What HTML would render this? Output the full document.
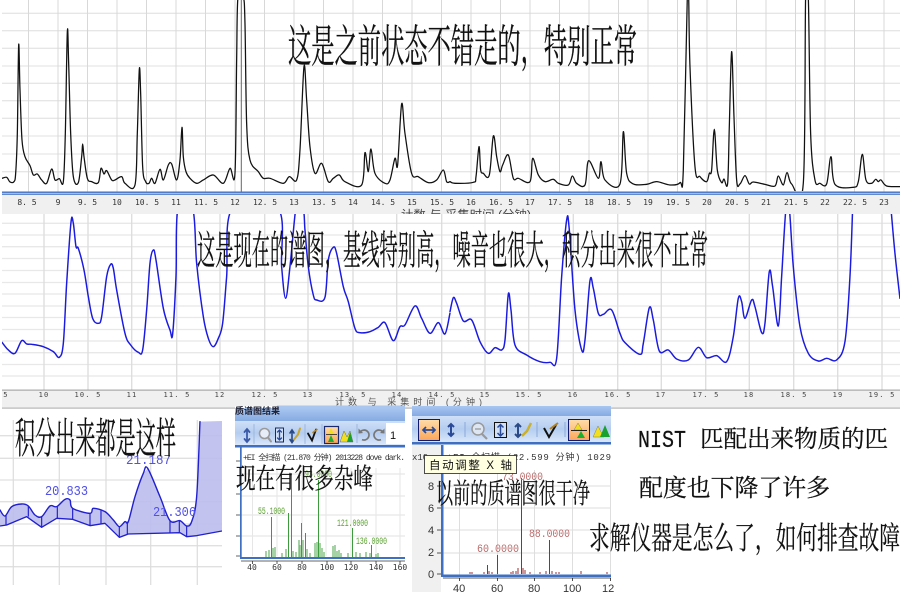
<!DOCTYPE html>
<html><head><meta charset="utf-8"><style>
html,body{margin:0;padding:0;background:#fff;width:900px;height:600px;overflow:hidden}
svg{display:block}
.cn{font-family:"Liberation Serif","Noto Serif CJK SC",serif;fill:#111;stroke:#111;stroke-width:.25px}
.sans{font-family:"Liberation Sans","Noto Sans CJK SC",sans-serif}
.ax{font-family:"DejaVu Sans Mono","Liberation Mono",monospace;font-size:8px;fill:#333;text-anchor:middle}
.ax2{font-family:"DejaVu Sans Mono","Liberation Mono",monospace;font-size:7px;letter-spacing:1.2px;fill:#444;text-anchor:middle}
.m{font-family:"Liberation Mono",monospace}
.t{stroke-linejoin:round;stroke-linecap:round;filter:blur(.3px)}
</style></head><body>
<svg width="900" height="600" viewBox="0 0 900 600" xmlns="http://www.w3.org/2000/svg">
<defs>
<clipPath id="c1"><rect x="2" y="0" width="898" height="191"/></clipPath>
<clipPath id="c2"><rect x="2" y="214" width="898" height="176"/></clipPath>
<clipPath id="c3"><rect x="0" y="420" width="222" height="170"/></clipPath>
<linearGradient id="bar" x1="0" y1="0" x2="0" y2="1"><stop offset="0" stop-color="#cfe0f7"/><stop offset=".5" stop-color="#b4cdf0"/><stop offset="1" stop-color="#d9e7fa"/></linearGradient>
<linearGradient id="tit" x1="0" y1="0" x2="0" y2="1"><stop offset="0" stop-color="#a8c6f0"/><stop offset="1" stop-color="#86abe2"/></linearGradient>
<linearGradient id="org" x1="0" y1="0" x2="0" y2="1"><stop offset="0" stop-color="#ffdca8"/><stop offset="1" stop-color="#fba65a"/></linearGradient>
</defs>

<!-- top chart -->
<rect x="2" y="0" width="898" height="214" fill="#fff"/>
<path d="M2 13.3H900M2 30.7H900M2 48.3H900M2 66H900M2 83.3H900M2 100.7H900M2 118.3H900M2 136H900M2 154H900M2 171.7H900" stroke="#e6e6e6" stroke-width="1.3" fill="none"/>
<path d="M28.5 0V192M58 0V192M87.5 0V192M117 0V192M146.5 0V192M176 0V192M205.5 0V192M235 0V192M264.5 0V192M294 0V192M323.5 0V192M353 0V192M382.5 0V192M412 0V192M441.5 0V192M471 0V192M500.5 0V192M530 0V192M559.5 0V192M589 0V192M618.5 0V192M648 0V192M677.5 0V192M707 0V192M736.5 0V192M766 0V192M795.5 0V192M825 0V192M854.5 0V192M884 0V192" stroke="#d8d8d8" stroke-width="1"/>
<g clip-path="url(#c1)">
<path class="t" transform="scale(.3333)" fill="none" stroke="#111" stroke-width="3.8" d="M6 535L20 532L30 546L42 545L47 520L52 400L56 135L60 270L66 420L75 470L90 497L100 525L112 522L125 540L140 550L155 507L165 540L178 536L190 545L196 400L202 95L206 190L212 400L220 530L235 548L245 470L248 432L252 470L262 535L275 545L295 548L303 505L312 522L320 512L335 540L345 540L365 530L375 550L405 555L412 400L418 208L422 280L428 500L437 545L447 550L455 535L465 550L480 508L490 540L505 495L515 492L530 540L540 480L546 382L550 470L558 515L570 535L590 550L610 540L640 525L670 550L690 505L705 520L710 180L714 -10L730 -10L735 70L740 370L750 480L775 515L790 535L810 535L850 550L868 530L890 540L900 450L912 200L920 300L930 440L945 520L965 490L985 545L1000 535L1018 525L1035 545L1085 555L1095 458L1105 515L1113 447L1125 520L1155 550L1170 540L1185 475L1193 495L1205 312L1215 400L1235 520L1255 530L1285 548L1310 540L1330 510L1340 545L1350 545"/>
<path class="t" transform="translate(450 0) scale(.3333)" fill="none" stroke="#111" stroke-width="3.8" d="M0 545L15 550L70 547L78 530L87 440L92 510L100 520L118 525L130 408L140 470L150 515L158 495L175 465L190 535L205 535L240 545L248 475L265 525L285 545L310 538L325 550L355 555L367 528L380 550L405 555L416 482L445 535L453 485L465 540L510 552L520 395L530 520L550 552L590 553L620 545L660 555L690 548L700 510L712 -10L716 -10L720 200L735 500L750 530L770 545L778 520L785 510L793 388L802 510L815 548L822 537L833 550L838 380L845 155L852 350L860 540L870 552L885 527L898 552L910 546L945 553L975 558L985 528L1000 555L1011 518L1025 552L1060 550L1067 -10L1075 -10L1082 400L1095 540L1110 550L1130 552L1143 470L1155 553L1210 562L1225 545L1237 463L1248 540L1265 550L1277 538L1285 545L1293 540L1310 558L1350 560"/>
</g>
<path d="M241.3 0V192" stroke="#666" stroke-width="1"/>
<rect x="2" y="192" width="898" height="22" fill="#f0f0f0"/>
<rect x="2" y="191.5" width="898" height="1.4" fill="#3f6fc6"/>
<rect x="2" y="193.6" width="898" height="1.2" fill="#3f6fc6"/>
<g class="ax">
<text x="27" y="205">8. 5</text><text x="58" y="205">9</text><text x="87.5" y="205">9. 5</text><text x="117" y="205">10</text><text x="147" y="205">10. 5</text><text x="176" y="205">11</text><text x="206" y="205">11. 5</text><text x="235" y="205">12</text><text x="265" y="205">12. 5</text><text x="294" y="205">13</text><text x="324" y="205">13. 5</text><text x="353" y="205">14</text><text x="383" y="205">14. 5</text><text x="412" y="205">15</text><text x="442" y="205">15. 5</text><text x="471" y="205">16</text><text x="501" y="205">16. 5</text><text x="530" y="205">17</text><text x="560" y="205">17. 5</text><text x="589" y="205">18</text><text x="619" y="205">18. 5</text><text x="648" y="205">19</text><text x="678" y="205">19. 5</text><text x="707" y="205">20</text><text x="737" y="205">20. 5</text><text x="766" y="205">21</text><text x="796" y="205">21. 5</text><text x="825" y="205">22</text><text x="855" y="205">22. 5</text><text x="884" y="205">23</text>
</g>
<text x="401" y="218" class="sans" font-size="11" fill="#444" textLength="130" lengthAdjust="spacingAndGlyphs">计数 与 采集时间 (分钟)</text>

<!-- second chart -->
<rect x="2" y="214" width="898" height="176" fill="#fff"/>
<path d="M2 223.3H900M2 235H900M2 246.7H900M2 258.5H900M2 270.5H900M2 282.5H900M2 294H900M2 306H900M2 317.5H900M2 329.5H900M2 341H900M2 352.7H900M2 364.5H900M2 376H900" stroke="#e8e8e8" stroke-width="1.3" fill="none"/>
<path d="M44 214V390M88 214V390M131.7 214V390M176.7 214V390M220 214V390M264.7 214V390M308 214V390M353 214V390M396.7 214V390M441.7 214V390M485 214V390M528.7 214V390M573.3 214V390M617.7 214V390M661.3 214V390M705.7 214V390M749.3 214V390M793.7 214V390M837.7 214V390M882 214V390" stroke="#dcdcdc" stroke-width="1.3"/>
<g clip-path="url(#c2)">
<path class="t" transform="translate(0 210) scale(.3333)" fill="none" stroke="#1a1ae0" stroke-width="4.4" d="M6 397L25 420L45 430L65 392L80 402L95 403L130 410L160 425L178 442L190 400L200 220L213 37L220 40L228 110L235 115L252 180L265 260L278 325L295 340L305 320L320 200L332 163L340 175L350 240L375 370L392 405L415 427L428 420L440 300L450 160L460 120L468 150L490 295L510 360L518 372L528 200L534 -5L578 -5L590 160L610 320L625 385L640 410L655 385L668 340L680 200L697 -5L834 -5L845 170L857 265L870 170L885 15L890 0L910 0L915 60L925 170L940 255L950 270L975 262L985 150L1000 112L1010 130L1030 230L1045 275L1065 355L1080 368L1110 365L1135 352L1155 338L1180 392L1200 350L1215 345L1245 288L1265 325L1290 370L1315 338L1335 372L1350 310"/>
<path class="t" transform="translate(450 210) scale(.3333)" fill="none" stroke="#1a1ae0" stroke-width="4.4" d="M0 305L10 263L20 280L40 333L65 330L90 395L115 430L135 413L155 420L165 390L175 252L183 300L195 405L230 435L270 455L300 457L320 445L335 200L350 30L358 60L375 300L395 420L405 390L420 212L430 235L445 310L460 313L485 300L510 370L525 398L570 433L580 400L598 293L610 330L628 423L655 420L680 447L715 450L745 412L770 443L800 437L830 455L850 380L865 265L875 275L885 325L905 270L915 290L935 368L945 340L958 185L968 230L985 348L995 200L1008 -5L1018 -5L1030 170L1050 350L1075 430L1105 453L1130 445L1160 450L1185 395L1200 200L1208 -5M1323 -5L1335 130L1350 265"/>
</g>
<rect x="2" y="390" width="898" height="18" fill="#f0f0f0"/>
<rect x="2" y="389.6" width="898" height="1" fill="#999"/>
<rect x="2" y="407.6" width="898" height="1" fill="#aaa"/>
<g class="ax2">
<text x="6" y="397">5</text><text x="44" y="397">10</text><text x="88" y="397">10. 5</text><text x="132" y="397">11</text><text x="177" y="397">11. 5</text><text x="220" y="397">12</text><text x="265" y="397">12. 5</text><text x="308" y="397">13</text><text x="353" y="397">13. 5</text><text x="397" y="397">14</text><text x="442" y="397">14. 5</text><text x="485" y="397">15</text><text x="529" y="397">15. 5</text><text x="573" y="397">16</text><text x="618" y="397">16. 5</text><text x="661" y="397">17</text><text x="706" y="397">17. 5</text><text x="749" y="397">18</text><text x="794" y="397">18. 5</text><text x="838" y="397">19</text><text x="882" y="397">19. 5</text>
</g>
<text x="335" y="405" class="sans" font-size="9" fill="#555" textLength="147" lengthAdjust="spacing">计数 与 采集时间 (分钟)</text>

<!-- bottom left integration -->
<rect x="0" y="409" width="234" height="191" fill="#fff"/>
<path d="M0 435.7H222M0 458.3H222M0 480H222M0 501.7H222M0 524H222M0 545.7H222M0 566.7H222" stroke="#e0e0e0" stroke-width="1.3" fill="none"/>
<path d="M13.3 420V585M59.3 420V585M106 420V585M150.7 420V585M197.3 420V585" stroke="#dcdcdc" stroke-width="1.2"/>
<g clip-path="url(#c3)"><g transform="translate(0 400) scale(.3333)">
<path fill="#bcbcee" fill-opacity=".9" d="M0 330L15 348L35 320L65 312L85 318L105 345L125 350L150 318L170 320L195 298L210 300L218 325L270 340L280 325L315 335L340 360L358 380L375 365L385 365L405 290L430 220L443 205L480 290L510 362L540 362L560 378L575 365L590 290L600 65L666 63L666 393L590 407L560 410L540 398L385 402L358 412L315 370L270 377L218 358L170 355L125 382L80 350L20 375L0 378Z"/>
<path class="t" fill="none" stroke="#2020d0" stroke-width="4.200" d="M0 330L15 348L35 320L65 312L85 318L105 345L125 350L150 318L170 320L195 298L210 300L218 325L270 340L280 325L315 335L340 360L358 380L375 365L385 365L405 290L430 220L443 205L480 290L510 362L540 362L560 378L575 365L590 290L600 65"/>
<path fill="none" stroke="#2020d0" stroke-width="4" stroke-linejoin="round" d="M0 378L20 375L80 350L125 382L170 355L218 358L270 377L315 370L358 412L385 402L540 398L560 410L590 407L666 393"/>
<path fill="none" stroke="#2020d0" stroke-width="3.5" d="M18 345V376M85 318V350M125 350V382M172 320V355M218 325V358M270 340V377M303 332V371M358 380V412M382 365V402M510 362V398M538 362V398M560 378V410"/>
</g></g>
<g class="m" font-size="14" fill="#5050ea">
<text x="45" y="495" textLength="43" lengthAdjust="spacingAndGlyphs">20.833</text>
<text x="126" y="464" textLength="45" lengthAdjust="spacingAndGlyphs">21.187</text>
<text x="153" y="516" textLength="43" lengthAdjust="spacingAndGlyphs">21.306</text>
</g>

<!-- middle spectrum -->
<rect x="235" y="406" width="170" height="164" fill="#fff"/>
<rect x="277" y="405.500" width="128" height="3.500" fill="#aac6ee"/>
<rect x="235" y="408" width="170" height="13" fill="url(#tit)"/>
<text x="235" y="414" class="sans" font-size="9" fill="#223" font-weight="bold" textLength="45" lengthAdjust="spacingAndGlyphs">质谱图结果</text>
<rect x="235" y="421" width="170" height="24" fill="url(#bar)"/>
<rect x="235" y="445" width="170" height="2.500" fill="#3e6fc0"/>
<rect x="386" y="423" width="19" height="21" fill="#fff"/>
<text x="390" y="439" class="sans" font-size="11" fill="#111">1</text>
<g fill="none" stroke-linecap="round" transform="translate(0 1.500)">
<path d="M247 428V440M244.500 430.500L247 427.500L249.500 430.500M244.500 437.500L247 440.500L249.500 437.500" stroke="#3a5aa8" stroke-width="1.800"/>
<path d="M254 423V442" stroke="#9cb6dc"/>
<circle cx="264.500" cy="432" r="5" stroke="#999" stroke-width="1.500" fill="#e8eef8"/><path d="M268 436L271 440" stroke="#999" stroke-width="2"/>
<rect x="275.500" y="426.500" width="8" height="14" stroke="#1a2a60" stroke-width="1" fill="#cfe0f7"/>
<path d="M279.500 428.500V438.500M277.500 430.500L279.500 428.500L281.500 430.500M277.500 436.500L279.500 438.500L281.500 436.500" stroke="#2a4a98" stroke-width="1.300"/>
<path d="M292 429V441M290 431.500L292 428.500L294 431.500M290 438L292 441L294 438" stroke="#2a4a88" stroke-width="1.600"/>
<path d="M294 438L298 433L300 427" stroke="#c8a830" stroke-width="2"/>
<path d="M305 423V442" stroke="#9cb6dc"/>
<path d="M308 432L312 439L316 428" stroke="#111" stroke-width="1.800"/><path d="M313 431L317 428" stroke="#b08020" stroke-width="1.500"/>
<path d="M322 423V442" stroke="#9cb6dc"/>
</g>
<rect x="324.500" y="426.500" width="14" height="17" fill="url(#org)" stroke="#1a2a70" stroke-width="1.200"/>
<path d="M331 428L328 434H334Z" fill="#f2e020"/><path d="M331 435L328 442H334Z" fill="#18b030"/><path d="M326 434.500H337" stroke="#222" stroke-width=".8"/>
<path d="M340 442L344 431L347 437L350 431L353 442Z" fill="#f2e020" stroke="#222" stroke-width=".3"/><path d="M347 442L350 432L353 442Z" fill="#18a030"/>
<path d="M357 424V443" stroke="#9cb6dc"/>
<path d="M360.500 431.500A5 5 0 1 1 362 439.600" fill="none" stroke="#777" stroke-width="1.700"/><path d="M358.500 428.500V433.500L363 433Z" fill="#777"/>
<path d="M382.500 431.500A5 5 0 1 0 381 439.600" fill="none" stroke="#777" stroke-width="1.700"/><path d="M384.500 428.500V433.500L380 433Z" fill="#777"/>
<text x="243" y="460" class="m" font-size="8" fill="#333" textLength="162" lengthAdjust="spacing">+EI 全扫描 (21.870 分钟) 2013228 dove dark.</text>
<path d="M252.500 468V556M277 468V556M302 468V556M326 468V556M351 468V556M376 468V556M400 468V556" stroke="#e6e6e6"/>
<path d="M241 474H405M241 496H405M241 515H405M241 536H405" stroke="#e6e6e6" stroke-width="1.300"/>
<path d="M271.500 517V557M288.500 513V557M291.500 473V557M301.500 523V557M305.500 533V557M318.500 480V557M352.500 528V557M371.500 545V557" stroke="#3d9a3d" stroke-width="1"/>
<path d="M266 551V557M269 550V557M273 548V557M275 547V557M282 553V557M286 549V557M293 551V557M296 552V557M299 540V557M300 545V557M303 540V557M307 549V557M310 553V557M315 543V557M317 542V557M320 543V557M322 548V557M324 552V557M333 546V557M335 545V557M337 551V557M339 550V557M341 553V557M348 553V557M356 552V557M360 553V557M366 552V557M370 553V557M376 554V557M378 553V557" stroke="#7fbe7f" stroke-width="1.400"/>
<g class="m" font-size="10" fill="#5aa030">
<text x="258" y="514" textLength="27" lengthAdjust="spacingAndGlyphs">55.1000</text>
<text x="337" y="526" textLength="31" lengthAdjust="spacingAndGlyphs">121.0000</text>
<text x="356" y="544" textLength="31" lengthAdjust="spacingAndGlyphs">136.0000</text>
<text x="305" y="477" textLength="27" lengthAdjust="spacingAndGlyphs">93.0000</text>
</g>
<rect x="240" y="447.500" width="1.700" height="111" fill="#3e6fc0"/>
<rect x="240" y="557" width="165" height="2" fill="#3e6fc0"/>
<path d="M236 461H240M236 494H240M236 515H240M236 536H240M236 556H240M241 561H405M252.500 561V564M277 561V564M302 561V564M327 561V564M351 561V564M376 561V564M400 561V564" stroke="#333" stroke-width=".8" fill="none"/>
<g class="ax"><text x="252" y="570">40</text><text x="277" y="570">60</text><text x="302" y="570">80</text><text x="327" y="570">100</text><text x="351" y="570">120</text><text x="376" y="570">140</text><text x="400" y="570">160</text></g>

<!-- right spectrum -->
<rect x="412" y="406" width="199" height="186" fill="#fff"/>
<rect x="412" y="444" width="29" height="148" fill="#f0f0f0"/>
<rect x="412" y="406" width="199" height="10" fill="url(#tit)"/>
<rect x="412" y="416" width="199" height="26" fill="url(#bar)"/>
<rect x="412" y="442" width="199" height="2.500" fill="#3e6fc0"/>
<rect x="418.500" y="419.500" width="21" height="21" fill="url(#org)" stroke="#101a70" stroke-width="1"/>
<path d="M423 430H435M426 427L423 430L426 433M432 427L435 430L432 433" fill="none" stroke="#2a4a98" stroke-width="1.700"/>
<path d="M451 424V436M448 427L451 424L454 427M448 433L451 436L454 433" fill="none" stroke="#2a4a98" stroke-width="2"/>
<path d="M465 422V437" stroke="#8aa8d8"/>
<circle cx="478" cy="429" r="6" fill="#dde6f2" stroke="#999" stroke-width="1.500"/><path d="M482 434L487 439" stroke="#999" stroke-width="2.200"/><path d="M475 429H481" stroke="#999" stroke-width="1.300"/>
<rect x="494.500" y="422.500" width="12" height="15" fill="#cfe0f7" stroke="#111"/>
<path d="M500.500 424.500V436M497.500 427.500L500.500 424.500L503.500 427.500M497.500 433L500.500 436L503.500 433" fill="none" stroke="#2a4a98" stroke-width="1.500"/>
<path d="M518 424V437M515 427L518 424L521 427M515 434L518 437L521 434" fill="none" stroke="#2a4a88" stroke-width="2"/>
<path d="M522 436L527 431L531 423" fill="none" stroke="#c8b030" stroke-width="2.500"/>
<path d="M537 422V437" stroke="#8aa8d8"/>
<path d="M544 428L549 437L556 425" fill="none" stroke="#111" stroke-width="2"/><path d="M550 429L558 423" stroke="#b08020" stroke-width="2"/>
<path d="M565 422V437" stroke="#8aa8d8"/>
<rect x="568.500" y="419.500" width="21" height="21" fill="url(#org)" stroke="#101a70" stroke-width="1"/>
<path d="M578 423L574 430H582Z" fill="#f2e020" stroke="#444" stroke-width=".3"/><path d="M581 431L577 438H585Z" fill="#18b030"/><path d="M571 430.500H587" stroke="#222"/>
<path d="M593 437L598 426L601 432L604 437Z" fill="#f2e020" stroke="#444" stroke-width=".3"/><path d="M600 437L605 425L610 437Z" fill="#18a030"/>
<text x="412" y="460" class="m" font-size="9" fill="#333">x10</text>
<text x="447" y="460" class="m" font-size="9" fill="#333" textLength="164" lengthAdjust="spacing">+EI 全扫描 (22.599 分钟) 1029</text>
<path d="M459.500 470V575M497.500 470V575M534.500 470V575M572.500 470V575M610.500 470V575" stroke="#dedede"/>
<path d="M442 486H611M442 508H611M442 530H611M442 553H611" stroke="#dedede" stroke-width="1"/>
<path d="M521.500 478V574M549.500 540V574M497.500 555V574M487.500 565V574M525 570V574M518 568V574M523 568V574M513 571V574M516 571V574M470 572V574M472 572V574M484 572V574M489 571V574M492 572V574M511 572V574M530 572V574M540 572V574M546 571V574M552 571V574M556 572V574M559 572V574M581 571V574M607 572V574" stroke="#9c2c2c" stroke-width="1"/>
<rect x="441" y="445" width="2.500" height="132" fill="#3e6fc0"/>
<rect x="441" y="574.500" width="170" height="2.500" fill="#3e6fc0"/>
<path d="M437 486H441M437 508H441M437 530H441M437 553H441M437 574H441M443 578H611M459.500 578V581M497.500 578V581M534.500 578V581M572.500 578V581M610.500 578V581" stroke="#222" stroke-width=".8" fill="none"/>
<g class="m" font-size="11" fill="#b86a6a">
<text x="477" y="552" textLength="42" lengthAdjust="spacingAndGlyphs">60.0000</text>
<text x="529" y="537" textLength="41" lengthAdjust="spacingAndGlyphs">88.0000</text>
<text x="502" y="480" textLength="41" lengthAdjust="spacingAndGlyphs">73.0000</text>
</g>
<g class="sans" font-size="11" fill="#333">
<text x="428" y="490">8</text><text x="428" y="512">6</text><text x="428" y="534">4</text><text x="428" y="556">2</text><text x="428" y="578">0</text>
<text x="453" y="592">40</text><text x="491" y="592">60</text><text x="528" y="592">80</text><text x="563" y="592">100</text><text x="602" y="592">12</text>
</g>
<rect x="424.500" y="455.500" width="92" height="18" fill="#ffffe1" stroke="#222" stroke-width=".8"/>
<text x="429" y="469" class="sans" font-size="11.500" fill="#111" textLength="83" lengthAdjust="spacing">自动调整 X 轴</text>

<!-- big annotations -->
<g class="cn">
<text x="288" y="62" font-size="45" textLength="349" lengthAdjust="spacingAndGlyphs">这是之前状态不错走的，特别正常</text>
<text x="197" y="264" font-size="40" textLength="511" lengthAdjust="spacingAndGlyphs">这是现在的谱图，基线特别高，噪音也很大，积分出来很不正常</text>
<text x="15" y="453" font-size="42" textLength="161" lengthAdjust="spacingAndGlyphs">积分出来都是这样</text>
<text x="236" y="488" font-size="28" textLength="137" lengthAdjust="spacingAndGlyphs">现在有很多杂峰</text>
<text x="436" y="503" font-size="28" textLength="154" lengthAdjust="spacingAndGlyphs">以前的质谱图很干净</text>
<text x="638" y="447" font-size="24" textLength="48" lengthAdjust="spacingAndGlyphs" style="font-family:'Liberation Mono',monospace">NIST</text>
<text x="700" y="447" font-size="24" textLength="188" lengthAdjust="spacingAndGlyphs">匹配出来物质的匹</text>
<text x="639" y="496" font-size="24" textLength="191" lengthAdjust="spacingAndGlyphs">配度也下降了许多</text>
<text x="589" y="549" font-size="31" textLength="311" lengthAdjust="spacingAndGlyphs">求解仪器是怎么了，如何排查故障</text>
</g>
</svg>
<script>
document.querySelectorAll('path.t').forEach(function(p){
  var out='';
  p.getAttribute('d').split('M').filter(Boolean).forEach(function(s){
    var a=s.split('L').map(function(q){return q.trim().split(/\s+/).map(Number)});
    out+='M'+a[0][0]+' '+a[0][1];
    for(var i=0;i<a.length-1;i++){
      var p0=a[Math.max(i-1,0)],p1=a[i],p2=a[i+1],p3=a[Math.min(i+2,a.length-1)];
      out+='C'+(p1[0]+(p2[0]-p0[0])/6).toFixed(1)+' '+(p1[1]+(p2[1]-p0[1])/6).toFixed(1)+' '+(p2[0]-(p3[0]-p1[0])/6).toFixed(1)+' '+(p2[1]-(p3[1]-p1[1])/6).toFixed(1)+' '+p2[0]+' '+p2[1];
    }
  });
  p.setAttribute('d',out);
});
</script>
</body></html>
